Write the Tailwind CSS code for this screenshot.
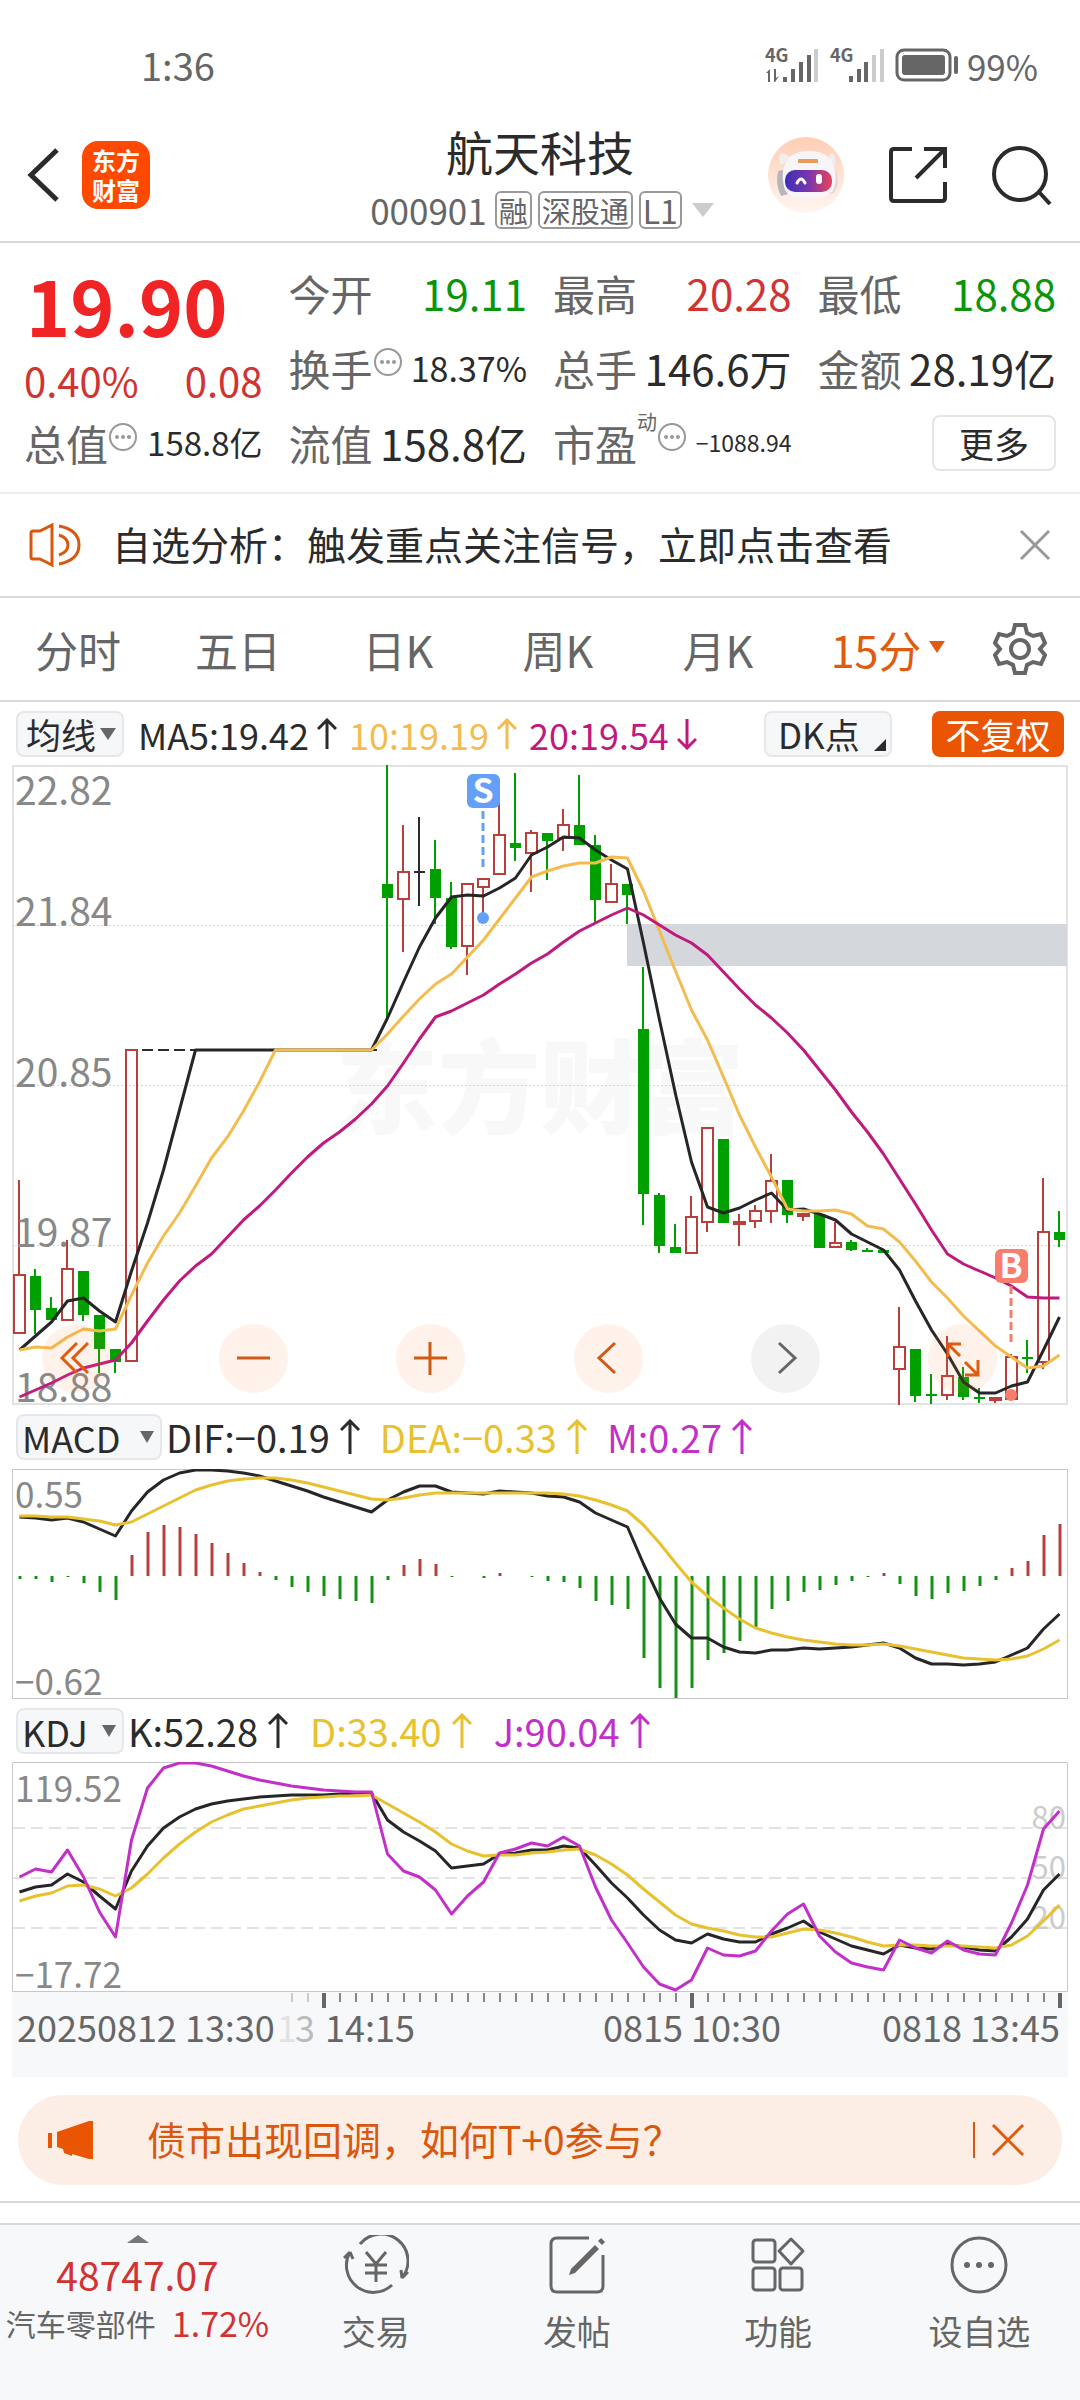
<!DOCTYPE html>
<html lang="zh-CN">
  <head>
    <meta charset="UTF-8" />
    <meta name="viewport" content="width=device-width, initial-scale=1.0" />
    <title>航天科技 000901</title>
    <script src="https://cdn.jsdelivr.net/npm/@tailwindcss/browser@4"></script>
  </head>
  <body
    class="flex min-h-screen flex-col bg-white font-['Noto_Sans_CJK_SC',sans-serif] text-[#2b2b2b]"
  >
    <!-- status bar -->
    <div class="flex h-[108px] items-center justify-between pt-[22px] pr-[42px] pl-[141px] text-[#666]">
      <span class="text-[38px] leading-none">1:36</span>
      <div class="flex items-center gap-2">
        <svg class="h-9 w-[120px] overflow-visible" viewBox="0 0 120 36" fill="#666">
          <text x="0" y="15" font-size="18" font-weight="700">4G</text>
          <path d="M1 26l4-4v13H3v-9zM9 22h2v9l3-2-4 6H9z" />
          <path d="M18 30h4v5h-4zM26 22h4v13h-4zM34 15h4v20h-4zM42 8h4v27h-4z" />
          <path d="M49 2h4v33h-4z" fill="#ccc" />
          <text x="65" y="15" font-size="18" font-weight="700">4G</text>
          <path d="M84 29h4v6h-4zM92 22h4v13h-4zM99 15h4v20h-4z" />
          <path d="M107 8h4v27h-4zM115 2h4v33h-4z" fill="#ccc" />
        </svg>
        <svg class="h-9 w-[66px]" viewBox="0 0 66 36">
          <rect x="4" y="3" width="53" height="30" rx="7" fill="none" stroke="#666" stroke-width="3" />
          <rect x="9" y="8" width="43" height="20" rx="3" fill="#666" />
          <rect x="61" y="9" width="4" height="18" rx="2" fill="#666" />
        </svg>
        <span class="text-[35px] leading-none">99%</span>
      </div>
    </div>

    <!-- header -->
    <header
      class="grid h-[135px] grid-cols-[1fr_auto_1fr] items-center border-b-2 border-[#d9d9d9] px-6"
    >
      <div class="flex items-center gap-[22px]">
        <button aria-label="返回">
          <svg class="h-14 w-[36px]" viewBox="0 0 36 56" fill="none" stroke="#2b2b2b" stroke-width="5">
            <path d="M33 3L7 28l26 25" />
          </svg>
        </button>
        <a
          href="#"
          class="flex h-[68px] w-[68px] flex-col items-center justify-center rounded-2xl bg-[#ff4800] text-[24px] leading-[30px] font-bold text-white"
          ><span>东方</span><span>财富</span></a
        >
      </div>
      <div class="flex flex-col items-center">
        <h1 class="text-[47px] leading-[60px]">航天科技</h1>
        <div class="mt-2.5 flex items-center gap-1.5 pl-1 text-[35px] leading-9 text-[#666]">
          <span class="mr-0.5">000901</span>
          <span class="rounded-md border-2 border-[#999] px-0.5 text-[29px] leading-[34px]">融</span>
          <span class="rounded-md border-2 border-[#999] px-0.5 text-[29px] leading-[34px]">深股通</span>
          <span class="rounded-md border-2 border-[#999] px-0.5 text-[32px] leading-[34px]">L1</span>
          <svg class="ml-1 h-[14px] w-[22px]" viewBox="0 0 22 14" fill="#ccc"><path d="M0 0h22L11 14z" /></svg>
        </div>
      </div>
      <div class="flex items-center justify-end gap-11 pr-1">
        <button aria-label="智能助手">
          <svg class="h-[76px] w-[76px]" viewBox="0 0 76 76">
            <defs>
              <linearGradient id="halo" x1="0" y1="0" x2="0" y2="1">
                <stop offset="0" stop-color="#ffcdb5" />
                <stop offset="1" stop-color="#fff6f1" />
              </linearGradient>
              <linearGradient id="visor" x1="0" y1="0" x2="1" y2="0">
                <stop offset="0" stop-color="#3b2fb5" />
                <stop offset="0.5" stop-color="#7a35b0" />
                <stop offset="1" stop-color="#e8435a" />
              </linearGradient>
            </defs>
            <circle cx="38" cy="38" r="38" fill="url(#halo)" />
            <path d="M12 28q-2-14 3-12l10 6zM60 24q3-12 6-6q3 5 0 14z" fill="#f3eeee" />
            <path d="M10 34q-3 14 3 25l7-2V32z" fill="#b9b5bd" />
            <path d="M68 34q4 12-2 22l-6 1V32z" fill="#d9d5da" />
            <path d="M15 34q3-20 26-20t26 20q2 10-2 20-8 8-26 8-17 0-22-9-3-9-2-19z" fill="#f7f5f7" />
            <rect x="30" y="22" width="20" height="4" rx="1" fill="#e79a5a" />
            <rect x="17" y="33" width="47" height="22" rx="10" fill="url(#visor)" />
            <path d="M29 46q4-8 8 0" fill="none" stroke="#fff" stroke-width="3" stroke-linecap="round" />
            <rect x="48" y="37" width="6" height="10" rx="3" fill="#fff" />
          </svg>
        </button>
        <button aria-label="分享">
          <svg class="h-[60px] w-[60px]" viewBox="0 0 60 60" fill="none" stroke="#2b2b2b" stroke-width="4">
            <path d="M24 4H6q-3 0-3 3v46q0 3 3 3h48q3 0 3-3V37" />
            <path d="M36 4h21v19M57 4L28 33" />
          </svg>
        </button>
        <button aria-label="搜索">
          <svg class="h-[60px] w-[60px]" viewBox="0 0 60 60" fill="none" stroke="#2b2b2b" stroke-width="4">
            <circle cx="28" cy="29" r="26" />
            <path d="M47 47l11 12" />
          </svg>
        </button>
      </div>
    </header>

    <!-- quote -->
    <section
      class="grid auto-rows-[75px] grid-cols-4 gap-x-[26px] border-b-2 border-[#eee] px-6 py-3 text-[42px] leading-none whitespace-nowrap"
    >
      <div class="row-span-2 text-[#d13232]">
        <div class="h-[100px] pl-0.5 text-[75px] leading-[100px] font-bold text-[#f02424]">19.90</div>
        <div class="flex h-[50px] items-center justify-between text-[40px]">
          <span>0.40%</span><span>0.08</span>
        </div>
      </div>
      <div class="flex items-center justify-between">
        <span class="text-[#666]">今开</span><span class="text-[#0a960a]">19.11</span>
      </div>
      <div class="flex items-center justify-between">
        <span class="text-[#666]">最高</span><span class="text-[#d13232]">20.28</span>
      </div>
      <div class="flex items-center justify-between">
        <span class="text-[#666]">最低</span><span class="text-[#0a960a]">18.88</span>
      </div>
      <div class="flex items-center justify-between">
        <span class="flex text-[#666]"
          >换手
          <svg class="h-[30px] w-[30px]" viewBox="0 0 30 30" fill="#999">
            <circle cx="15" cy="15" r="13" fill="none" stroke="#999" stroke-width="2" />
            <circle cx="9" cy="15" r="2" /><circle cx="15" cy="15" r="2" /><circle cx="21" cy="15" r="2" />
          </svg>
        </span>
        <span class="text-[34px]">18.37%</span>
      </div>
      <div class="flex items-center justify-between"><span class="text-[#666]">总手</span><span>146.6万</span></div>
      <div class="flex items-center justify-between"><span class="text-[#666]">金额</span><span>28.19亿</span></div>
      <div class="flex items-center justify-between">
        <span class="flex text-[#666]"
          >总值
          <svg class="h-[30px] w-[30px]" viewBox="0 0 30 30" fill="#999">
            <circle cx="15" cy="15" r="13" fill="none" stroke="#999" stroke-width="2" />
            <circle cx="9" cy="15" r="2" /><circle cx="15" cy="15" r="2" /><circle cx="21" cy="15" r="2" />
          </svg>
        </span>
        <span class="text-[33px]">158.8亿</span>
      </div>
      <div class="flex items-center justify-between"><span class="text-[#666]">流值</span><span>158.8亿</span></div>
      <div class="flex items-center justify-between">
        <span class="flex text-[#666]"
          >市盈<sup class="top-0 -mt-2.5 text-[20px] leading-none">动</sup>
          <svg class="h-[30px] w-[30px]" viewBox="0 0 30 30" fill="#999">
            <circle cx="15" cy="15" r="13" fill="none" stroke="#999" stroke-width="2" />
            <circle cx="9" cy="15" r="2" /><circle cx="15" cy="15" r="2" /><circle cx="21" cy="15" r="2" />
          </svg>
        </span>
        <span class="text-[23px]">−1088.94</span>
      </div>
      <div class="flex items-center justify-end">
        <button class="h-14 w-[124px] rounded-lg border-2 border-[#e5e5e5] text-[35px] leading-none">更多</button>
      </div>
    </section>

    <!-- notice -->
    <section class="flex h-[104px] items-center border-b-2 border-[#d9d9d9] pr-[29px] pl-[28px]">
      <svg class="h-[44px] w-[54px]" viewBox="0 0 54 44" fill="none" stroke="#d9580f" stroke-width="3">
        <path d="M3 10q0-2 2-2h7l12-6v40l-12-6H5q-2 0-2-2z" />
        <path d="M31 12q9 3 9 10t-9 10M31 3q20 4 20 19T31 41" />
      </svg>
      <p class="ml-[30px] pb-1 text-[39px] leading-none">自选分析：触发重点关注信号，立即点击查看</p>
      <button class="ml-auto" aria-label="关闭">
        <svg class="h-8 w-8" viewBox="0 0 32 32" stroke="#999" stroke-width="3"><path d="M2 2l28 28M30 2L2 30" /></svg>
      </button>
    </section>

    <!-- period tabs -->
    <nav
      class="grid h-[104px] grid-cols-[4fr_4fr_4fr_4fr_4fr_4fr_3fr] items-center border-b-2 border-[#d9d9d9] text-[43px] leading-none text-[#666]"
    >
      <button class="pr-1">分时</button>
      <button class="pr-1">五日</button>
      <button class="pr-1">日K</button>
      <button class="pr-1">周K</button>
      <button class="pr-1">月K</button>
      <button class="flex items-center justify-center gap-2 pl-4 text-[#e05a10]" aria-haspopup="listbox">
        15分
        <svg class="-mt-1 h-3 w-4" viewBox="0 0 16 12" fill="#e05a10"><path d="M0 0h16L8 12z" /></svg>
      </button>
      <button class="flex justify-center" aria-label="设置">
        <svg class="h-[54px] w-[54px]" viewBox="0 0 54 54" fill="none" stroke="#666" stroke-width="4">
          <path d="M22 3h10l2 8 6 3 8-2 4 9-5 6 5 6-4 9-8-2-6 3-2 8H22l-2-8-6-3-8 2-4-9 5-6-5-6 4-9 8 2 6-3z" />
          <circle cx="27" cy="27" r="9" />
        </svg>
      </button>
    </nav>

    <main class="px-3">
      <!-- moving averages -->
      <div class="flex h-[63px] items-center pr-1 pl-1 text-[36px] leading-none whitespace-nowrap">
        <div class="relative">
          <label class="sr-only" for="mainIndex">主图指标</label>
          <select id="mainIndex" class="h-[46px] w-[108px] appearance-none rounded-lg border-2 border-[#e5e7ea] bg-[#f6f7f9] pl-2 text-[35px] leading-10">
            <option>均线</option>
          </select>
          <svg class="pointer-events-none absolute top-[17px] right-2 h-3 w-4" viewBox="0 0 16 12" fill="#666"><path d="M0 0h16L8 12z" /></svg>
        </div>
        <span class="ml-3.5">MA5:19.42</span>
        <svg class="ml-2 h-8 w-5" viewBox="0 0 20 32" fill="none" stroke="#2b2b2b" stroke-width="3"><path d="M10 31V2M1 11l9-9 9 9" /></svg>
        <span class="ml-3 text-[#f3bc4f]">10:19.19</span>
        <svg class="ml-2 h-8 w-5" viewBox="0 0 20 32" fill="none" stroke="#f3bc4f" stroke-width="3"><path d="M10 31V2M1 11l9-9 9 9" /></svg>
        <span class="ml-3 text-[#bf1a7d]">20:19.54</span>
        <svg class="ml-2 h-8 w-5" viewBox="0 0 20 32" fill="none" stroke="#bf1a7d" stroke-width="3"><path d="M10 1v29M1 21l9 9 9-9" /></svg>
        <button class="relative ml-auto h-[46px] w-[128px] rounded-lg border-2 border-[#e5e7ea] bg-[#f6f7f9] pl-3 text-left text-[35px]">
          DK点
          <svg class="absolute right-1 bottom-1 h-3 w-3" viewBox="0 0 12 12" fill="#2b2b2b"><path d="M12 0v12H0z" /></svg>
        </button>
        <button class="ml-10 h-[46px] w-[132px] rounded-lg bg-[#ea5504] text-[35px] text-white">不复权</button>
      </div>

      <!-- candles -->
      <div class="relative">
        <svg id="kline" class="block h-auto w-full" viewBox="12 765 1056 640" fill="none">
          <text x="336" y="1126" font-size="102" font-weight="900" fill="#f8f8f8">东方财富</text>
          <g stroke="#d5d5d5" stroke-width="1" stroke-dasharray="2 2">
            <path d="M13 925.5h1054M13 1085.5h1054M13 1245.5h1054" />
          </g>
          <path d="M13 766h1054v638H13z" stroke="#e3e3e3" stroke-width="2" />
          <path d="M627 924h440v42H627z" fill="#d4d7dc" />
        </svg>
        <div class="absolute right-[71px] bottom-3 left-[30px] flex justify-between">
          <button class="h-[69px] w-[69px] rounded-full bg-[#f97b3b]/10" aria-label="最早">
            <svg class="h-full w-full" viewBox="0 0 69 69" fill="none" stroke="#e05a10" stroke-width="3"><path d="M35 19L20 34l15 15M46 19L31 34l15 15" /></svg>
          </button>
          <button class="h-[69px] w-[69px] rounded-full bg-[#f97b3b]/10" aria-label="缩小">
            <svg class="h-full w-full" viewBox="0 0 69 69" stroke="#cf5a17" stroke-width="3"><path d="M18 34h33" /></svg>
          </button>
          <button class="h-[69px] w-[69px] rounded-full bg-[#f97b3b]/10" aria-label="放大">
            <svg class="h-full w-full" viewBox="0 0 69 69" stroke="#cf5a17" stroke-width="3"><path d="M18 34h33M34 18v33" /></svg>
          </button>
          <button class="h-[69px] w-[69px] rounded-full bg-[#f97b3b]/10" aria-label="向左">
            <svg class="h-full w-full" viewBox="0 0 69 69" fill="none" stroke="#cf5a17" stroke-width="3"><path d="M41 19L25 34l16 15" /></svg>
          </button>
          <button class="h-[69px] w-[69px] rounded-full bg-black/5" aria-label="向右">
            <svg class="h-full w-full" viewBox="0 0 69 69" fill="none" stroke="#666" stroke-width="3"><path d="M28 19l16 15-16 15" /></svg>
          </button>
          <button class="h-[69px] w-[69px] rounded-full bg-[#f97b3b]/10" aria-label="全屏">
            <svg class="h-full w-full" viewBox="0 0 69 69" fill="none" stroke="#e05a10" stroke-width="3"><path d="M20 33V20h13M20 20l12 12M37 38l13 13M50 36v15H37" /></svg>
          </button>
        </div>
      </div>

      <!-- MACD -->
      <div class="flex h-16 items-center pl-1 text-[38px] leading-none whitespace-nowrap">
        <div class="relative">
          <label class="sr-only" for="sub1">副图一</label>
          <select id="sub1" class="h-[46px] w-[146px] appearance-none rounded-lg border-2 border-[#e5e7ea] bg-[#f6f7f9] pl-1 text-[36px] leading-10">
            <option>MACD</option>
          </select>
          <svg class="pointer-events-none absolute top-[17px] right-2 h-3 w-[14px]" viewBox="0 0 14 12" fill="#666"><path d="M0 0h14L7 12z" /></svg>
        </div>
        <span class="ml-1">DIF:−0.19</span>
        <svg class="ml-2.5 h-9 w-5" viewBox="0 0 20 36" fill="none" stroke="#2b2b2b" stroke-width="3"><path d="M10 35V2M1 11l9-9 9 9" /></svg>
        <span class="ml-5 text-[#e8c12f]">DEA:−0.33</span>
        <svg class="ml-2.5 h-9 w-5" viewBox="0 0 20 36" fill="none" stroke="#e8c12f" stroke-width="3"><path d="M10 35V2M1 11l9-9 9 9" /></svg>
        <span class="ml-5 text-[#c32fc9]">M:0.27</span>
        <svg class="ml-2.5 h-9 w-5" viewBox="0 0 20 36" fill="none" stroke="#c32fc9" stroke-width="3"><path d="M10 35V2M1 11l9-9 9 9" /></svg>
      </div>
      <svg id="macd" class="block h-auto w-full" viewBox="12 1469 1056 230" fill="none">
        <path d="M12.5 1469.5h1055v229h-1055z" stroke="#c8c8c8" />
      </svg>

      <!-- KDJ -->
      <div class="flex h-[63px] items-center pl-1 text-[38px] leading-none whitespace-nowrap">
        <div class="relative">
          <label class="sr-only" for="sub2">副图二</label>
          <select id="sub2" class="h-[46px] w-[108px] appearance-none rounded-lg border-2 border-[#e5e7ea] bg-[#f6f7f9] pl-1 text-[36px] leading-10">
            <option>KDJ</option>
          </select>
          <svg class="pointer-events-none absolute top-[17px] right-2 h-3 w-[14px]" viewBox="0 0 14 12" fill="#666"><path d="M0 0h14L7 12z" /></svg>
        </div>
        <span class="ml-1">K:52.28</span>
        <svg class="ml-2.5 h-9 w-5" viewBox="0 0 20 36" fill="none" stroke="#2b2b2b" stroke-width="3"><path d="M10 35V2M1 11l9-9 9 9" /></svg>
        <span class="ml-[22px] text-[#e8c12f]">D:33.40</span>
        <svg class="ml-2.5 h-9 w-5" viewBox="0 0 20 36" fill="none" stroke="#e8c12f" stroke-width="3"><path d="M10 35V2M1 11l9-9 9 9" /></svg>
        <span class="ml-[22px] text-[#c32fc9]">J:90.04</span>
        <svg class="ml-2.5 h-9 w-5" viewBox="0 0 20 36" fill="none" stroke="#c32fc9" stroke-width="3"><path d="M10 35V2M1 11l9-9 9 9" /></svg>
      </div>
      <svg id="kdj" class="block h-auto w-full" viewBox="12 1762 1056 230" fill="none">
        <path d="M12.5 1762.5h1055v229h-1055z" stroke="#c8c8c8" />
        <path d="M13 1828h1054M13 1878h1054M13 1928h1054" stroke="#e3e3e3" stroke-width="2" stroke-dasharray="12 6" />
        <g font-size="31" fill="#ccc" text-anchor="end">
          <text x="1066" y="1829">80</text>
          <text x="1066" y="1879">50</text>
          <text x="1066" y="1929">20</text>
        </g>
      </svg>

      <!-- time axis -->
      <svg id="axis" class="block h-auto w-full bg-[#f7f8fa]" viewBox="12 1992 1056 85" fill="#666" font-size="36">
        <text x="17" y="2042">20250812 13:30</text>
        <text x="277" y="2042" fill="#e2e2e2">1</text>
        <text x="295" y="2042" fill="#bbb">3</text>
        <text x="325" y="2042">14:15</text>
        <text x="692" y="2042" text-anchor="middle">0815 10:30</text>
        <text x="1060" y="2042" text-anchor="end">0818 13:45</text>
      </svg>
    </main>

    <!-- promo -->
    <div class="border-b-2 border-[#d9d9d9] px-[18px] pt-[18px] pb-4">
      <div class="flex h-[90px] items-center rounded-full bg-[#fceee5] pr-[37px] pl-[30px] text-[#d9580f]">
        <svg class="h-10 w-[46px]" viewBox="0 0 46 40" fill="#ea5504">
          <path d="M0 13h4v15H0zM9 12L41 1h4v38h-4l-17-5v2l-8-3-1-4-6-2z" />
        </svg>
        <a href="#" class="ml-[53px] pb-1 text-[39px] leading-none">债市出现回调，如何T+0参与？</a>
        <span class="ml-auto h-9 border-l-2 border-[#d9580f]"></span>
        <button class="ml-4" aria-label="关闭推广">
          <svg class="h-[34px] w-[34px]" viewBox="0 0 34 34" stroke="#e05a10" stroke-width="3"><path d="M2 2l30 30M32 2L2 32" /></svg>
        </button>
      </div>
    </div>

    <!-- bottom nav -->
    <footer
      class="mt-5 grid grow grid-cols-[41fr_30fr_30fr_30fr_30fr] border-t-2 border-[#d9d9d9] bg-[#f7f8fa] pt-2.5 text-[34px] leading-10 whitespace-nowrap text-[#666]"
    >
      <a href="#" class="flex flex-col items-center">
        <svg class="h-2 w-[22px]" viewBox="0 0 22 8" fill="#777"><path d="M11 0l11 8H0z" /></svg>
        <span class="mt-2 text-[39px] leading-[46px] text-[#d13232]">48747.07</span>
        <span class="mt-0.5 flex items-center gap-4 text-[30px] leading-[48px]">
          汽车零部件<span class="text-[34px] text-[#d13232]">1.72%</span>
        </span>
      </a>
      <a href="#" class="flex flex-col items-center gap-4">
        <svg class="h-[60px] w-[66px]" viewBox="0 0 66 60" fill="none" stroke="#666" stroke-width="3">
          <path d="M17 9a27 27 0 0 1 42 34M59 43l6-6M59 43l-1-8M49 50A27 27 0 0 1 7 17M7 17l-6 6M7 17l3 7" />
          <path d="M23 17l10 12 10-12M33 29v18M22 30h22M22 38h22" />
        </svg>
        交易
      </a>
      <a href="#" class="flex flex-col items-center gap-4">
        <svg class="h-[60px] w-[60px]" viewBox="0 0 60 60" fill="none" stroke="#666" stroke-width="3">
          <path d="M42 3H10q-6 0-6 6v42q0 6 6 6h40q6 0 6-6V20" />
          <path d="M24 34l24-24 4 4-24 24-6 2zM51 6l3-3 4 4-3 3z" fill="#666" stroke="none" />
        </svg>
        发帖
      </a>
      <a href="#" class="flex flex-col items-center gap-4">
        <svg class="h-[60px] w-[60px]" viewBox="0 0 60 60" fill="none" stroke="#666" stroke-width="3" stroke-linejoin="round">
          <rect x="5" y="5" width="22" height="22" rx="3" />
          <rect x="5" y="33" width="22" height="22" rx="3" />
          <rect x="32" y="33" width="22" height="22" rx="3" />
          <path d="M43 4l12 12-12 13-12-13z" />
        </svg>
        功能
      </a>
      <a href="#" class="flex flex-col items-center gap-4">
        <svg class="h-[60px] w-[60px]" viewBox="0 0 60 60" fill="#666">
          <circle cx="30" cy="30" r="27" fill="none" stroke="#666" stroke-width="3" />
          <circle cx="18" cy="30" r="3" /><circle cx="30" cy="30" r="3" /><circle cx="42" cy="30" r="3" />
        </svg>
        设自选
      </a>
    </footer>

    <script>
      const NS = "http://www.w3.org/2000/svg";
      const RED = "#b8403c";
      const GREEN = "#00a000";
      const px = (i) => 19 + 16 * i;

      const add = (id, tag, attrs, text) => {
        const el = document.createElementNS(NS, tag);
        for (const k in attrs) el.setAttribute(k, attrs[k]);
        if (text) el.textContent = text;
        document.getElementById(id).appendChild(el);
      };
      const line = (id, color, ys) =>
        add(id, "polyline", {
          points: ys.map((y, i) => `${px(i) + 0.5},${y}`).join(" "),
          stroke: color,
          "stroke-width": 3,
          "stroke-linejoin": "round",
        });
      const label = (id, y, text, size) =>
        add(id, "text", { x: 15, y, "font-size": size, fill: "#888" }, text);
      const flat = (n, y) => Array(n).fill(y);

      /* index, colour, high, body top, body bottom, low */
      const candles = [
        [0, "r", 1180, 1275, 1333, 1333], [1, "g", 1269, 1276, 1310, 1334],
        [2, "g", 1297, 1308, 1320, 1320], [3, "r", 1240, 1269, 1320, 1320],
        [4, "g", 1271, 1271, 1315, 1321], [5, "g", 1315, 1315, 1349, 1373],
        [6, "g", 1349, 1349, 1362, 1373], [7, "r", 1050, 1050, 1361, 1361],
        [23, "g", 765, 884, 898, 1018], [24, "r", 825, 872, 899, 952],
        [25, "k", 817, 871, 873, 906], [26, "g", 840, 869, 898, 924],
        [27, "g", 882, 898, 947, 949], [28, "r", 883, 884, 946, 975],
        [29, "r", 878, 879, 887, 922], [30, "r", 783, 835, 874, 874],
        [31, "g", 773, 843, 848, 861], [32, "r", 830, 833, 853, 892],
        [33, "g", 833, 833, 841, 880], [34, "r", 809, 825, 838, 851],
        [35, "g", 775, 825, 845, 845], [36, "g", 835, 845, 900, 923],
        [37, "r", 864, 884, 902, 902], [38, "g", 884, 884, 895, 924],
        [39, "g", 967, 1029, 1194, 1225], [40, "g", 1193, 1195, 1246, 1253],
        [41, "g", 1224, 1247, 1253, 1253], [42, "r", 1196, 1217, 1253, 1253],
        [43, "r", 1128, 1128, 1222, 1232], [44, "g", 1139, 1139, 1223, 1223],
        [45, "r", 1214, 1222, 1224, 1246], [46, "r", 1205, 1211, 1221, 1228],
        [47, "r", 1154, 1181, 1211, 1223], [48, "g", 1180, 1180, 1215, 1223],
        [49, "r", 1213, 1214, 1216, 1221], [50, "g", 1214, 1214, 1248, 1248],
        [51, "r", 1222, 1243, 1247, 1247], [52, "g", 1240, 1242, 1250, 1251],
        [53, "g", 1248, 1250, 1252, 1252], [54, "g", 1250, 1250, 1253, 1253],
        [55, "r", 1307, 1347, 1369, 1405], [56, "g", 1349, 1349, 1396, 1402],
        [57, "g", 1374, 1394, 1396, 1404], [58, "r", 1336, 1376, 1395, 1400],
        [59, "g", 1367, 1377, 1397, 1400], [60, "g", 1388, 1397, 1399, 1403],
        [61, "r", 1397, 1398, 1400, 1403], [62, "r", 1354, 1357, 1399, 1399],
        [63, "g", 1340, 1357, 1359, 1373], [64, "r", 1178, 1232, 1362, 1369],
        [65, "g", 1211, 1232, 1240, 1247],
      ];
      candles.forEach(([i, c, high, top, bottom, low]) => {
        const x = px(i);
        const color = { r: RED, g: GREEN, k: "#2b2b2b" }[c];
        add("kline", "path", {
          d: `M${x} ${high}V${top}M${x} ${c === "r" ? bottom : top}V${low}`,
          stroke: color,
          "stroke-width": 2,
        });
        if (c === "r")
          add("kline", "rect", { x: x - 5, y: top, width: 11, height: bottom - top, stroke: color, "stroke-width": 2 });
        else add("kline", "rect", { x: x - 5, y: top, width: 11, height: bottom - top, fill: color });
      });
      for (let i = 8; i < 23; i++)
        add("kline", "path", { d: `M${px(i) - 5} 1050h11`, stroke: "#2b2b2b", "stroke-width": 2 });

      label("kline", 805, "22.82", 39);
      label("kline", 926, "21.84", 39);
      label("kline", 1087, "20.85", 39);
      label("kline", 1247, "19.87", 39);
      label("kline", 1402, "18.88", 39);

      line("kline", "#262626", [
        1350, 1336, 1322, 1301, 1298, 1311, 1322, 1271, 1223, 1170, 1110, ...flat(12, 1050),
        1018, 982, 947, 918, 897, 895, 896, 888, 878, 855, 847, 837, 838, 850, 860, 869,
        943, 1020, 1094, 1162, 1207, 1213, 1208, 1200, 1193, 1210, 1209, 1214, 1220, 1234,
        1242, 1250, 1270, 1301, 1330, 1354, 1382, 1393, 1393, 1386, 1382, 1350, 1317,
      ]);
      line("kline", "#f3bc4f", [
        1350, 1347, 1348, 1337, 1329, 1331, 1329, 1295, 1263, 1236, 1213, 1186, 1158, 1137,
        1111, 1082, ...flat(7, 1050), 1034, 1016, 999, 984, 974, 957, 940, 919, 898, 877,
        871, 866, 863, 863, 857, 858, 891, 931, 971, 1010, 1040, 1077, 1115, 1147, 1177,
        1209, 1211, 1211, 1210, 1214, 1226, 1229, 1242, 1261, 1282, 1298, 1316, 1331, 1346,
        1357, 1368, 1366, 1355,
      ]);
      line("kline", "#bf1a7d", [
        1397, 1390, 1383, 1375, 1368, 1364, 1360, 1343, 1321, 1300, 1281, 1266, 1254, 1237,
        1220, 1206, 1190, 1173, 1157, 1143, 1132, 1119, 1104, 1086, 1063, 1039, 1017, 1011,
        1003, 995, 984, 974, 963, 954, 942, 931, 923, 915, 908, 915, 925, 935, 943, 955,
        972, 989, 1005, 1018, 1033, 1050, 1070, 1090, 1112, 1132, 1154, 1179, 1204, 1230,
        1254, 1264, 1271, 1278, 1286, 1297, 1298, 1298,
      ]);

      /* buy / sell marks */
      const mark = (i, top, end, dot, color, letter) => {
        const x = px(i);
        add("kline", "rect", { x: x - 16, y: top, width: 33, height: 34, rx: 6, fill: color });
        add("kline", "text", { x, y: top + 29, "font-size": 34, "font-weight": 700, fill: "#fff", "text-anchor": "middle" }, letter);
        add("kline", "path", { d: `M${x} ${top + 37}V${end}`, stroke: color, "stroke-width": 3, "stroke-dasharray": "8 4" });
        add("kline", "circle", { cx: x, cy: dot, r: 6, fill: color });
      };
      mark(29, 774, 867, 918, "#64a0f8", "S");
      mark(62, 1249, 1342, 1395, "#f97d6c", "B");

      [
        3, 3, 6, 1, 7, 16, 24, -21, -44, -51, -49, -42, -33, -23, -13, -4, 4, 11, 16, 20, 23,
        25, 27, 4, -11, -17, -12, 1, 0, 2, -3, 0, 1, 5, 6, 12, 25, 29, 33, 82, 112, 122, 112,
        84, 77, 65, 51, 33, 25, 16, 14, 9, 5, 1, -3, 8, 20, 23, 17, 15, 10, 4, -8, -15, -41, -52,
      ].forEach((h, i) =>
        add("macd", "path", { d: `M${px(i) + 1} 1576v${h}`, stroke: h < 0 ? RED : "#159015", "stroke-width": 3 })
      );
      label("macd", 1508, "0.55", 35);
      label("macd", 1695, "−0.62", 35);
      line("macd", "#262626", [
        1517, 1518, 1520, 1518, 1522, 1529, 1536, 1511, 1492, 1480, 1473, 1470, 1470, 1471,
        1473, 1476, 1481, 1486, 1491, 1497, 1502, 1507, 1512, 1500, 1492, 1486, 1486, 1492,
        1493, 1494, 1491, 1492, 1493, 1496, 1497, 1502, 1513, 1520, 1527, 1564, 1598, 1624,
        1638, 1638, 1647, 1652, 1653, 1650, 1650, 1648, 1649, 1648, 1647, 1645, 1643, 1648,
        1658, 1664, 1664, 1665, 1664, 1662, 1655, 1648, 1629, 1614,
      ]);
      line("macd", "#e8c12f", [
        1516, 1516, 1517, 1517, 1519, 1521, 1525, 1522, 1514, 1506, 1498, 1490, 1485, 1481,
        1479, 1478, 1478, 1480, 1483, 1487, 1491, 1495, 1499, 1500, 1498, 1495, ...flat(8, 1493),
        1494, 1496, 1500, 1505, 1511, 1525, 1543, 1563, 1582, 1596, 1608, 1619, 1628, 1633,
        1637, 1640, 1642, 1644, 1645, 1645, 1644, 1646, 1649, 1652, 1655, 1658, 1659, 1660,
        1659, 1656, 1649, 1640,
      ]);

      label("kdj", 1802, "119.52", 35);
      label("kdj", 1988, "−17.72", 35);
      line("kdj", "#262626", [
        1892, 1887, 1885, 1874, 1882, 1896, 1909, 1871, 1846, 1828, 1817, 1809, 1804, 1801,
        1799, 1797, 1796, 1795, 1795, 1795, 1794, 1793, 1793, 1820, 1832, 1841, 1851, 1868,
        1866, 1864, 1854, 1853, 1850, 1850, 1846, 1848, 1865, 1883, 1898, 1915, 1930, 1940,
        1943, 1934, 1939, 1942, 1942, 1934, 1928, 1921, 1932, 1939, 1946, 1950, 1954, 1945,
        1948, 1949, 1944, 1947, 1950, 1951, 1937, 1919, 1890, 1874,
      ]);
      line("kdj", "#e8c12f", [
        1901, 1896, 1893, 1886, 1885, 1889, 1896, 1888, 1874, 1858, 1844, 1832, 1822, 1815,
        1809, 1806, 1803, 1800, 1798, 1797, 1796, 1796, 1795, 1804, 1813, 1822, 1832, 1844,
        1851, 1856, 1855, 1855, 1853, 1852, 1850, 1849, 1855, 1864, 1875, 1889, 1902, 1915,
        1924, 1928, 1931, 1935, 1937, 1937, 1933, 1929, 1930, 1933, 1937, 1942, 1946, 1945,
        1945, 1946, 1946, 1946, 1947, 1948, 1945, 1936, 1921, 1905,
      ]);
      line("kdj", "#c32fc9", [
        1877, 1869, 1872, 1850, 1877, 1912, 1937, 1840, 1788, 1768, 1763, 1763, 1766, 1771,
        1776, 1780, 1783, 1786, 1788, 1790, 1791, 1792, 1792, 1854, 1871, 1877, 1890, 1914,
        1896, 1882, 1853, 1849, 1843, 1846, 1837, 1846, 1887, 1920, 1943, 1967, 1984, 1990,
        1980, 1948, 1955, 1956, 1951, 1931, 1914, 1904, 1936, 1952, 1963, 1967, 1970, 1940,
        1948, 1953, 1941, 1950, 1954, 1955, 1923, 1885, 1829, 1811,
      ]);

      for (let i = 17; i < 66; i++) {
        const major = [19, 42, 65].includes(i);
        add("axis", "path", {
          d: `M${px(i) + 1} 1993v${major ? 15 : 9}`,
          stroke: i < 19 ? "#ccc" : major ? "#666" : "#888",
          "stroke-width": major ? 4 : 2,
        });
      }
    </script>
  </body>
</html>
